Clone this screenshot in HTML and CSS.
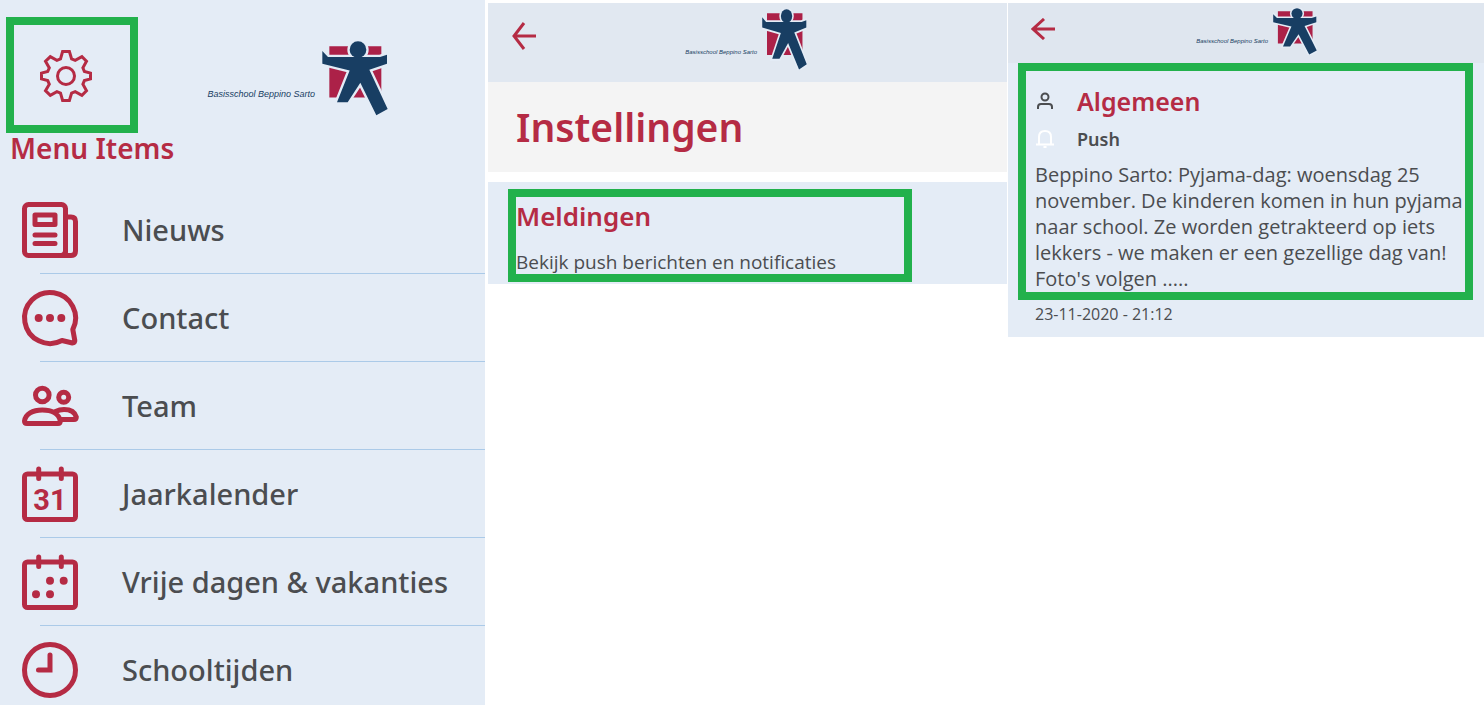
FILE: index.html
```html
<!DOCTYPE html>
<html lang="nl">
<head>
<meta charset="utf-8">
<meta name="viewport" content="width=device-width, initial-scale=1">
<title>Basisschool Beppino Sarto</title>
<link rel="stylesheet" href="styles.css">
</head>
<body>
<svg class="defs" aria-hidden="true">
  <symbol id="logo" viewBox="366 62 198 224" preserveAspectRatio="none">
    <path class="logo-red" d="M388 78H544V231H388Z"/>
    <g class="logo-gap">
      <circle cx="474" cy="88" r="25"/>
      <path d="M367 92 384 110H540L561 103V130L508 148 563 265 529 284 481 187 443 245H411L449 150 367 130Z"/>
    </g>
    <g class="logo-blue">
      <circle cx="474" cy="88" r="25"/>
      <path d="M367 92 384 110H540L561 103V130L508 148 563 265 529 284 481 187 443 245H411L449 150 367 130Z"/>
    </g>
  </symbol>
</svg>
<main class="screens">
  <section class="screen menu">
    <header class="menu-head">
      <button class="settings marked" type="button" aria-label="Instellingen">
        <svg class="gear" viewBox="0 0 52 52"><path d="M22.6 1.5h6.8l2.2 7.4 3.6 1.5 6.7-3.7 4.6 4.6-3.6 6.6 1.5 3.6 6.1 1.6v5.8l-6.1 1.7-1.5 3.6 3.6 6.5-4.6 4.6-6.7-3.7-3.6 1.5-2.2 7.4h-6.8l-2.1-7.4-3.6-1.5-6.6 3.7-4.8-4.6 3.8-6.5-1.6-3.6-6.2-1.7v-5.8l6.2-1.6 1.6-3.6-3.8-6.6 4.8-4.6 6.6 3.7 3.6-1.5Z"/><circle cx="26" cy="26" r="8.5"/></svg>
      </button>
      <div class="brand brand-large"><span>Basisschool Beppino Sarto</span><svg><use href="#logo"/></svg></div>
    </header>
    <h1 class="menu-title">Menu Items</h1>
    <nav>
      <ul class="menu-list">
        <li><a href="#nieuws"><svg class="icon" viewBox="0 0 56 56"><rect x="2.5" y="2.5" width="41" height="51" rx="4"/><path d="M43.5 15H49q4.5 0 4.5 4.5V49q0 4.5-4.5 4.5H39q4.5 0 4.5-4.5"/><path d="M13 13H33V22.5H13ZM13 33H33M13 41.5H33"/></svg>Nieuws</a></li>
        <li><a href="#contact"><svg class="icon" viewBox="0 0 56 56"><path d="M50.8 39.5A25.5 25.5 0 1 0 40 50.5L50.5 53Q53 53 52.8 50.5Z"/><g class="dots"><circle cx="16.7" cy="28" r="4"/><circle cx="28" cy="28" r="4"/><circle cx="39.3" cy="28" r="4"/></g></svg>Contact</a></li>
        <li><a href="#team"><svg class="icon" viewBox="0 0 56 56"><circle cx="20.3" cy="17" r="6.8"/><circle cx="41.7" cy="19.3" r="5"/><path d="M5 45.5H36Q38.3 45.5 38.3 43C37 36 30 32 20.3 32S3.5 36 2.5 43Q2.5 45.5 5 45.5ZM33.5 33.5Q37.5 31.5 42 31.5C49 31.5 53 34.5 54.3 39Q54.3 41.5 52 41.5H39"/></svg>Team</a></li>
        <li><a href="#jaarkalender"><svg class="icon" viewBox="0 0 56 56"><rect x="2.5" y="8" width="51" height="45.5" rx="3"/><path d="M16.7 3V12.5M39.3 3V12.5"/><text class="day" x="28" y="44">31</text></svg>Jaarkalender</a></li>
        <li><a href="#vakanties"><svg class="icon" viewBox="0 0 56 56"><rect x="2.5" y="8" width="51" height="45.5" rx="3"/><path d="M16.7 3V12.5M39.3 3V12.5"/><g class="dots"><circle cx="28" cy="26.7" r="4"/><circle cx="41.7" cy="26.7" r="4"/><circle cx="14" cy="40.3" r="4"/><circle cx="28" cy="40.3" r="4"/></g></svg>Vrije dagen &amp; vakanties</a></li>
        <li><a href="#schooltijden"><svg class="icon" viewBox="0 0 56 56"><circle cx="28" cy="28" r="25.5"/><path class="hands" d="M28 13V28H16.5"/></svg>Schooltijden</a></li>
      </ul>
    </nav>
  </section>

  <section class="screen options">
    <header class="bar">
      <button class="back" type="button" aria-label="Terug"><svg viewBox="0 0 24 28"><path d="M12 1 2 14 12 27M2 14H24"/></svg></button>
      <div class="brand brand-tall"><span>Basisschool Beppino Sarto</span><svg><use href="#logo"/></svg></div>
    </header>
    <h2 class="page-title">Instellingen</h2>
    <div class="card">
      <a class="option marked" href="#meldingen"><strong>Meldingen</strong><span>Bekijk push berichten en notificaties</span></a>
    </div>
  </section>

  <section class="screen message">
    <header class="bar">
      <button class="back" type="button" aria-label="Terug"><svg viewBox="0 0 24 22"><path d="M13 1 2 11 13 21M2 11H24"/></svg></button>
      <div class="brand brand-small"><span>Basisschool Beppino Sarto</span><svg><use href="#logo"/></svg></div>
    </header>
    <article class="post">
      <div class="post-body marked">
        <div class="post-row">
          <svg class="small-icon" viewBox="0 0 20 20"><circle cx="10" cy="6" r="3.5"/><path d="M3 18V16Q3 13 6 13H14Q17 13 17 16V18"/></svg>
          <h2>Algemeen</h2>
        </div>
        <div class="post-row">
          <svg class="small-icon bell" viewBox="0 0 20 20"><path d="M1 15.5H19M4 15V8Q4 2 10 2T16 8V15M8.5 18H11.5"/></svg>
          <h3>Push</h3>
        </div>
        <p>Beppino Sarto: Pyjama-dag: woensdag 25<br>november. De kinderen komen in hun pyjama<br>naar school. Ze worden getrakteerd op iets<br>lekkers - we maken er een gezellige dag van!<br>Foto's volgen .....</p>
      </div>
      <time datetime="2020-11-23T21:12">23-11-2020 - 21:12</time>
    </article>
  </section>
</main>
</body>
</html>
```
FILE: styles.css
```css
:root {
  --red: #b52b44;
  --navy: #183e63;
  --pale: #e4ecf6;
  --ink: #4b4d50;
  --green: #22b14c;
  --heading: "Noto Sans", "Open Sans", sans-serif;
  --body: "Open Sans", "Noto Sans", sans-serif;
}

* { box-sizing: border-box; }

body {
  margin: 0;
  background: #fff;
  color: var(--ink);
  font-family: var(--body);
}

h1, h2, h3, p, ul { margin: 0; padding: 0; }
h1, h2, h3, strong { font-family: var(--heading); font-weight: 600; }
a { color: inherit; text-decoration: none; }
button { padding: 0; border: 0; background: none; cursor: pointer; }
svg { display: block; flex: none; fill: none; stroke: var(--red); }
.defs { position: absolute; width: 0; height: 0; }

.marked { border: 8px solid var(--green); }

.screens {
  display: grid;
  grid-template-columns: 485fr 522fr 477fr;
  align-items: start;
}

/* School logo */
.brand {
  display: flex;
  color: var(--navy);
  font-family: "Liberation Sans", sans-serif;
  font-style: italic;
  white-space: nowrap;
}
.brand svg { stroke: none; }
.logo-red { fill: #ac2148; }
.logo-gap { fill: var(--pale); stroke: var(--pale); stroke-width: 14; }
.logo-blue { fill: var(--navy); }
.brand-large { gap: 7px; margin-top: 24px; font-size: 9px; }
.brand-large span { padding-top: 48px; }
.brand-large svg { width: 66px; height: 75px; }
.brand-tall { gap: 5px; font-size: 6px; }
.brand-tall span { padding-top: 40px; }
.brand-tall svg { width: 45px; height: 61px; }
.brand-small { gap: 5px; font-size: 6px; }
.brand-small span { padding-top: 30px; }
.brand-small svg { width: 44px; height: 47px; }

/* Menu */
.menu {
  height: 100vh;
  overflow: hidden;
  padding-top: 17px;
  background: var(--pale);
}
.menu-head {
  display: flex;
  align-items: flex-start;
  justify-content: space-between;
  padding: 0 97px 0 6px;
}
.settings {
  display: grid;
  place-items: center;
  width: 132px;
  height: 116px;
  padding: 2px 12px 0 0;
}
.gear { width: 52px; height: 52px; stroke-width: 3; }
.menu-title {
  padding-left: 10px;
  color: var(--red);
  font-size: 28px;
  line-height: 30px;
}
.menu-list { margin: 23px 0 0 40px; list-style: none; }
.menu-list li { height: 88px; border-bottom: 1px solid #abcae8; }
.menu-list a {
  display: flex;
  align-items: center;
  gap: 44px;
  height: 100%;
  margin-left: -18px;
  font: 500 29px/40px var(--heading);
  white-space: nowrap;
}
.icon {
  width: 56px;
  height: 56px;
  overflow: visible;
  stroke-width: 5;
  stroke-linecap: round;
  stroke-linejoin: round;
}
.dots, .day { fill: var(--red); stroke: none; }
.day { font: 700 29px Roboto, sans-serif; text-anchor: middle; }
.hands { stroke-linejoin: miter; }

/* Top bars */
.bar { display: flex; align-items: flex-start; justify-content: space-between; }
.back svg { width: 24px; stroke-width: 3; }

/* Settings */
.options { margin: 3px 0 0 3px; }
.options .bar { min-height: 79px; padding: 6px 200px 0 24px; background: #e1e8f1; }
.options .back { margin-top: 13px; }
.options .back svg { height: 28px; }
.page-title {
  padding: 15px 28px;
  background: #f4f4f4;
  color: var(--red);
  font-size: 39px;
  line-height: 60px;
}
.card { margin-top: 10px; padding: 7px 95px 2px 20px; background: var(--pale); }
.option { display: block; height: 93px; white-space: nowrap; }
.option strong { display: block; color: var(--red); font-size: 26px; line-height: 38px; }
.option span { display: block; padding-top: 12px; font-size: 19px; line-height: 30px; }

/* Message */
.message { margin: 3px 0 0 1px; background: var(--pale); }
.message .bar { min-height: 60px; padding: 5px 167px 0 23px; background: #dfe6ef; }
.message .back { margin-top: 10px; }
.message .back svg { height: 22px; }
.post { padding: 0 11px 9px 10px; }
.post-body { padding: 10px 0 0 9px; white-space: nowrap; }
.post-row { display: flex; align-items: center; gap: 22px; height: 40px; }
.post-row + .post-row { height: 36px; }
.post-row h2 { color: var(--red); font-size: 25px; line-height: 40px; }
.post-row h3 { font-size: 18px; line-height: 36px; }
.small-icon { width: 20px; height: 20px; stroke: var(--ink); stroke-width: 2; }
.bell { stroke: #fff; }
.post p { padding-top: 5px; font-size: 20px; line-height: 26px; }
.post time { display: block; padding-left: 17px; font-size: 16px; line-height: 28px; }
```
